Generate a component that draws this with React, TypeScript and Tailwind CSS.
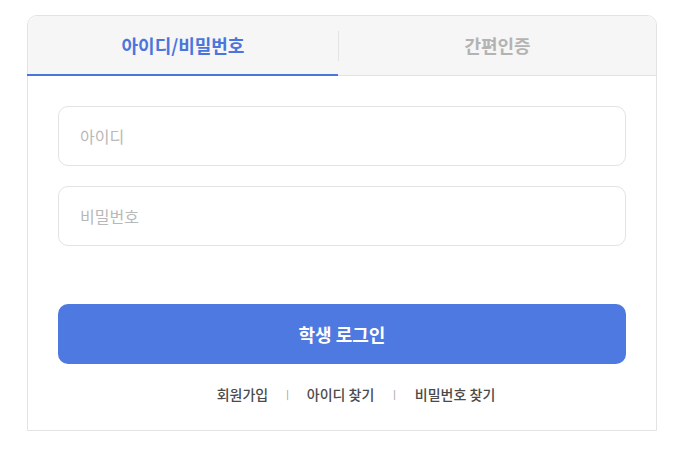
import { useState } from 'react'

const font = { fontFamily: '"Noto Sans CJK KR", "Noto Sans", sans-serif' }

export default function App() {
  const [tab, setTab] = useState<'id' | 'simple'>('id')

  return (
    <div className="min-h-screen bg-white pt-[15px] pl-[27px]" style={font}>
      <div className="w-[630px] border border-[#e3e3e3] rounded-t-[10px] bg-white">
        {/* Tabs */}
        <div className="flex items-center bg-[#f6f6f6] border-b border-[#e3e3e3] rounded-t-[10px]">
          <button
            onClick={() => setTab('id')}
            className={`relative w-[310px] h-[59px] text-[18px] font-bold ${
              tab === 'id' ? 'text-[#4a75dc]' : 'text-[#b3b3b3]'
            }`}
          >
            아이디/비밀번호
            {tab === 'id' && (
              <span className="absolute left-[-1px] right-0 bottom-[-1px] h-[2px] bg-[#4a75dc]" />
            )}
          </button>
          <div className="w-px h-[30px] bg-[#e3e3e3]" />
          <button
            onClick={() => setTab('simple')}
            className={`relative flex-1 h-[59px] text-[18px] font-bold ${
              tab === 'simple' ? 'text-[#4a75dc]' : 'text-[#b3b3b3]'
            }`}
          >
            간편인증
            {tab === 'simple' && (
              <span className="absolute left-0 right-0 bottom-[-1px] h-[2px] bg-[#4a75dc]" />
            )}
          </button>
        </div>

        {/* Form */}
        <div className="px-[30px] pt-[30px] pb-[25px]">
          <div className="flex flex-col gap-[20px]">
            <input
              placeholder="아이디"
              className="h-[60px] w-full rounded-[10px] border border-[#e3e3e3] px-[21px] text-[16px] text-[#333] placeholder:text-[#b8b8b8] outline-none"
            />
            <input
              type="password"
              placeholder="비밀번호"
              className="h-[60px] w-full rounded-[10px] border border-[#e3e3e3] px-[21px] text-[16px] text-[#333] placeholder:text-[#b8b8b8] outline-none"
            />
          </div>

          <button className="mt-[58px] h-[60px] w-full rounded-[10px] bg-[#4e79e0] text-white text-[18px] font-bold">
            학생 로그인
          </button>

          <div className="mt-[20px] pl-[28px] flex items-center justify-center text-[14px] font-medium text-[#4a4a4a]">
            <a href="#">회원가입</a>
            <span className="mx-[18px] text-[9px] text-[#999]">|</span>
            <a href="#">아이디 찾기</a>
            <span className="mx-[19px] text-[9px] text-[#999]">|</span>
            <a href="#">비밀번호 찾기</a>
          </div>
        </div>
      </div>
    </div>
  )
}
